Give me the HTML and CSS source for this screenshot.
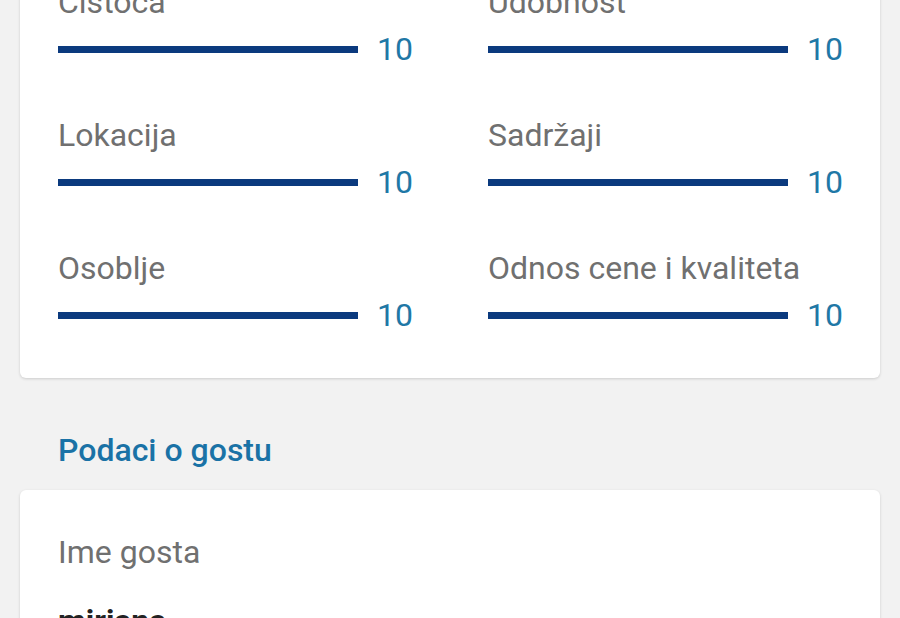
FILE: index.html
```html
<!DOCTYPE html>
<html lang="sr">
<head>
<meta charset="utf-8">
<title>Ocena</title>
<link rel="stylesheet" href="styles.css">
</head>
<body>
<main class="page">
  <section class="card ratings">
    <div class="rating">
      <div class="rating-label">Čistoća</div>
      <div class="rating-row"><div class="bar"><div class="bar-fill" style="width:100%"></div></div><span class="rating-value">10</span></div>
    </div>
    <div class="rating">
      <div class="rating-label">Udobnost</div>
      <div class="rating-row"><div class="bar"><div class="bar-fill" style="width:100%"></div></div><span class="rating-value">10</span></div>
    </div>
    <div class="rating">
      <div class="rating-label">Lokacija</div>
      <div class="rating-row"><div class="bar"><div class="bar-fill" style="width:100%"></div></div><span class="rating-value">10</span></div>
    </div>
    <div class="rating">
      <div class="rating-label">Sadržaji</div>
      <div class="rating-row"><div class="bar"><div class="bar-fill" style="width:100%"></div></div><span class="rating-value">10</span></div>
    </div>
    <div class="rating">
      <div class="rating-label">Osoblje</div>
      <div class="rating-row"><div class="bar"><div class="bar-fill" style="width:100%"></div></div><span class="rating-value">10</span></div>
    </div>
    <div class="rating">
      <div class="rating-label">Odnos cene i kvaliteta</div>
      <div class="rating-row"><div class="bar"><div class="bar-fill" style="width:100%"></div></div><span class="rating-value">10</span></div>
    </div>
  </section>

  <h2 class="section-title">Podaci o gostu</h2>

  <section class="card guest">
    <div class="field-label">Ime gosta</div>
    <div class="field-value">mirjana</div>
  </section>
</main>
</body>
</html>
```

FILE: styles.css
```css
* { box-sizing: border-box; }

html, body {
  margin: 0;
  padding: 0;
  background: #f2f2f2;
  font-family: Roboto, "Noto Sans", Arial, sans-serif;
  overflow: hidden;
}

.page {
  margin-top: -57px;
}

.card {
  background: #fff;
  margin: 0 20px;
  border-radius: 6px;
  box-shadow: 0 1px 3px rgba(0, 0, 0, 0.16);
}

.ratings {
  display: grid;
  grid-template-columns: 430px 1fr;
  padding: 40px 0 0 38px;
}

.rating {
  margin-bottom: 48px;
}

.rating:nth-last-child(-n+2) {
  margin-bottom: 44px;
}

.rating-label {
  font-size: 32px;
  line-height: 38px;
  color: #707070;
  white-space: nowrap;
}

.rating-row {
  display: flex;
  align-items: center;
  height: 38px;
  margin-top: 9px;
}

.bar {
  width: 300px;
  height: 7px;
  background: #e6e6e6;
}

.bar-fill {
  height: 100%;
  background: #0b3a7e;
}

.rating-value {
  margin-left: 19px;
  font-size: 32px;
  line-height: 38px;
  color: #1f78a6;
}

.section-title {
  margin: 53px 0 21px 58px;
  font-size: 32px;
  line-height: 38px;
  font-weight: 500;
  color: #1a72a6;
}

.guest {
  padding: 43px 38px 40px;
}

.field-label {
  font-size: 32px;
  line-height: 38px;
  color: #707070;
}

.field-value {
  margin-top: 31px;
  font-size: 32px;
  line-height: 38px;
  font-weight: 700;
  color: #222;
}
```
